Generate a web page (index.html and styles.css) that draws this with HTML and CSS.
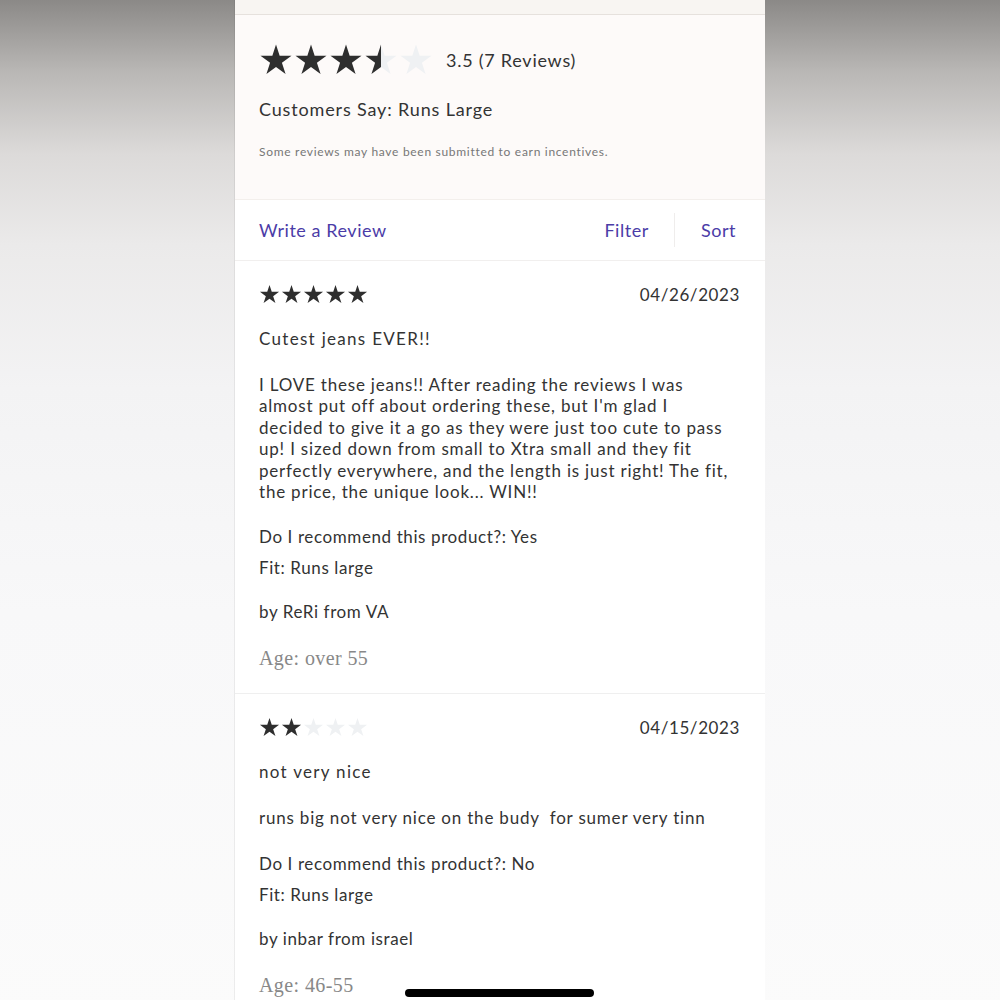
FILE: index.html
```html
<!DOCTYPE html>
<html lang="en">
<head>
    <meta charset="UTF-8" />
    <meta name="viewport" content="width=device-width, initial-scale=1.0" />
    <title>Reviews</title>
    <link rel="stylesheet" href="styles.css">
</head>
<body>

    <svg class="defs" width="0" height="0">
        <defs>
            <linearGradient id="halfFill" x1="0" x2="1" y1="0" y2="0">
                <stop offset="50%" stop-color="#2e2e2e" />
                <stop offset="50%" stop-color="#eff1f3" />
            </linearGradient>
            <symbol id="star" viewBox="0 0 24 24">
                <polygon points="12,1 14.58,8.95 22.94,8.95 16.18,13.86 18.76,21.8 12,16.89 5.24,21.8 7.82,13.86 1.06,8.95 9.42,8.95" />
            </symbol>
        </defs>
    </svg>

    <div class="phone">
        <div class="top-strip"></div>

        <!-- Summary -->
        <section class="summary">
            <div class="rating-row">
                <div class="stars big">
                    <svg class="on"><use href="#star" /></svg>
                    <svg class="on"><use href="#star" /></svg>
                    <svg class="on"><use href="#star" /></svg>
                    <svg class="half"><use href="#star" /></svg>
                    <svg class="off"><use href="#star" /></svg>
                </div>
                <span class="rating-text">3.5 (7 Reviews)</span>
            </div>
            <p class="customers-say">Customers Say: Runs Large</p>
            <p class="incentives">Some reviews may have been submitted to earn incentives.</p>
        </section>

        <!-- Toolbar -->
        <div class="toolbar">
            <a class="link">Write a Review</a>
            <div class="toolbar-right">
                <a class="link">Filter</a>
                <span class="divider"></span>
                <a class="link">Sort</a>
            </div>
        </div>

        <!-- Reviews -->
        <article class="review">
            <div class="review-head">
                <div class="stars small">
                    <svg class="on"><use href="#star" /></svg>
                    <svg class="on"><use href="#star" /></svg>
                    <svg class="on"><use href="#star" /></svg>
                    <svg class="on"><use href="#star" /></svg>
                    <svg class="on"><use href="#star" /></svg>
                </div>
                <span class="date">04/26/2023</span>
            </div>
            <h3 class="review-title">Cutest jeans EVER!!</h3>
            <p class="review-body">I LOVE these jeans!! After reading the reviews I was almost put off about ordering these, but I'm glad I decided to give it a go as they were just too cute to pass up! I sized down from small to Xtra small and they fit perfectly everywhere, and the length is just right! The fit, the price, the unique look... WIN!!</p>
            <p class="meta recommend">Do I recommend this product?: Yes</p>
            <p class="meta fit">Fit: Runs large</p>
            <p class="meta author">by ReRi from VA</p>
            <p class="age">Age: over 55</p>
        </article>

        <article class="review">
            <div class="review-head">
                <div class="stars small">
                    <svg class="on"><use href="#star" /></svg>
                    <svg class="on"><use href="#star" /></svg>
                    <svg class="off"><use href="#star" /></svg>
                    <svg class="off"><use href="#star" /></svg>
                    <svg class="off"><use href="#star" /></svg>
                </div>
                <span class="date">04/15/2023</span>
            </div>
            <h3 class="review-title">not very nice</h3>
            <p class="review-body">runs big not very nice on the budy&nbsp; for sumer very tinn</p>
            <p class="meta recommend">Do I recommend this product?: No</p>
            <p class="meta fit">Fit: Runs large</p>
            <p class="meta author">by inbar from israel</p>
            <p class="age">Age: 46-55</p>
        </article>
    </div>

    <div class="home-bar"></div>

</body>
</html>
```

FILE: styles.css
```css
body {
    margin: 0;
    font-family: 'Lato', 'Open Sans', sans-serif;
    color: #333;
    min-height: 100vh;
    display: flex;
    justify-content: center;
    align-items: flex-start;
    background: linear-gradient(to bottom, #8b8987 0%, #b9b7b5 7%, #dcdad9 15%, #ebeaea 24%, #f3f3f4 38%, #f8f8f9 60%, #fbfbfb 100%);
    overflow: hidden;
}

.defs {
    position: absolute;
}

p, h3 {
    margin: 0;
}

.phone {
    width: 530px;
    background: #ffffff;
    box-shadow: -1px 0 0 rgba(0, 0, 0, 0.06);
}

.top-strip {
    height: 14px;
    background: #f8f5f2;
    border-bottom: 1px solid #e6e1dd;
}

/* summary */
.summary {
    background: #fdfaf9;
    padding: 28px 24px 39px;
    border-bottom: 1px solid #f3efec;
}

.rating-row {
    display: flex;
    align-items: center;
    height: 34px;
}

.stars {
    display: flex;
}

.stars svg {
    display: block;
}

.stars.big svg {
    width: 34px;
    height: 34px;
    margin-right: 1px;
}

.stars.small svg {
    width: 21px;
    height: 21px;
    margin-right: 1px;
}

.stars .on {
    fill: #2e2e2e;
}

.stars .off {
    fill: #eff1f3;
}

.stars .half {
    fill: url(#halfFill);
}

.rating-text {
    margin-left: 12px;
    font-size: 18px;
    letter-spacing: 0.75px;
}

.customers-say {
    margin-top: 20px;
    font-size: 18px;
    line-height: 24px;
    letter-spacing: 0.85px;
}

.incentives {
    margin-top: 23px;
    font-size: 12px;
    line-height: 16px;
    color: #777;
    letter-spacing: 0.7px;
}

/* toolbar */
.toolbar {
    height: 60px;
    display: flex;
    align-items: center;
    justify-content: space-between;
    padding: 0 29px 0 24px;
    border-bottom: 1px solid #f1efee;
}

.toolbar-right {
    display: flex;
    align-items: center;
}

.link {
    color: #4b3ca7;
    font-size: 18px;
    letter-spacing: 0.55px;
    cursor: pointer;
}

.divider {
    width: 1px;
    height: 34px;
    background: #efedec;
    margin: 0 26px 0 25px;
}

/* reviews */
.review {
    padding: 23px 25px 22px 24px;
    border-bottom: 1px solid #efefef;
}

.review-head {
    display: flex;
    align-items: center;
    justify-content: space-between;
    height: 20px;
}

.date {
    font-size: 17px;
    letter-spacing: 0.6px;
}

.review-title {
    margin-top: 23px;
    font-size: 17px;
    font-weight: normal;
    line-height: 24px;
    letter-spacing: 1.3px;
}

.review-body {
    margin-top: 23px;
    margin-right: 6px;
    font-size: 17px;
    line-height: 21.4px;
    letter-spacing: 0.8px;
}

.meta {
    font-size: 17px;
    line-height: 24px;
    letter-spacing: 0.6px;
}

.recommend {
    margin-top: 23px;
}

.fit {
    margin-top: 7px;
}

.author {
    margin-top: 20px;
}

.age {
    margin-top: 21px;
    font-family: 'Liberation Serif', serif;
    font-size: 20px;
    line-height: 26px;
    color: #888;
    letter-spacing: 0.4px;
}

.home-bar {
    position: fixed;
    left: 405px;
    top: 989px;
    width: 189px;
    height: 8px;
    border-radius: 4px;
    background: #000;
}
```
